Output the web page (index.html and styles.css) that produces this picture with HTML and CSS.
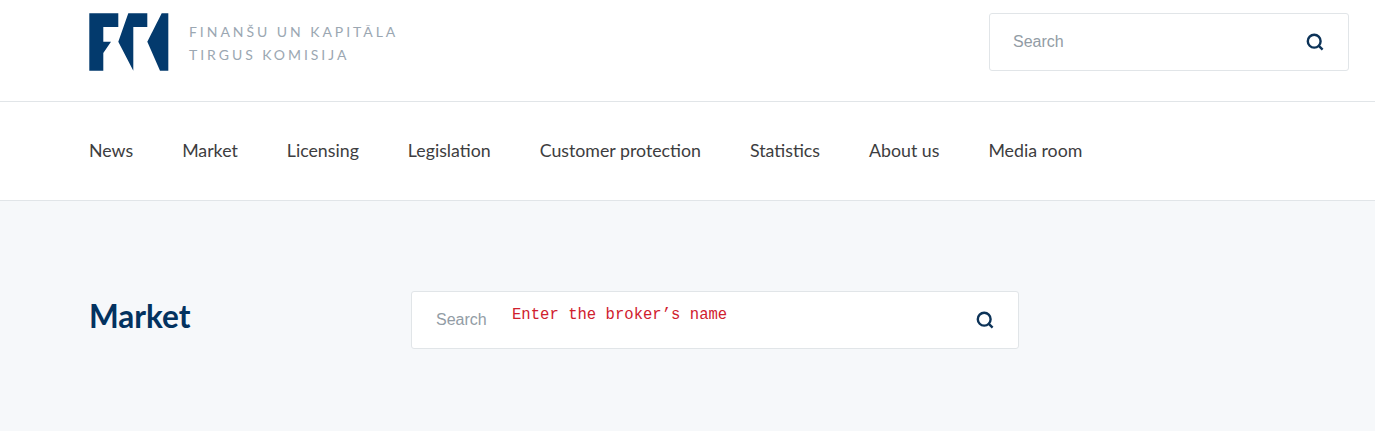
FILE: index.html
```html
<!DOCTYPE html>
<html lang="en">
<head>
    <meta charset="UTF-8">
    <meta name="viewport" content="width=device-width, initial-scale=1.0">
    <title>Market</title>
    <link rel="stylesheet" href="styles.css">
</head>
<body>
    <header class="top-bar">
        <a class="logo" href="#">
            <svg class="logo-mark" width="80" height="58" viewBox="0 0 80 58">
                <polygon points="0.3,0.3 29.3,0.3 29.3,14 14.3,14 14.3,28.7 22,28.7 14.3,40 14.3,57.7 0.3,57.7" fill="#033a6d"/>
                <polygon points="39.3,0.3 58.3,0.3 58.3,14 44.3,14 44.3,57.7 29.3,28.7" fill="#033a6d"/>
                <polygon points="72.7,0.3 79.3,0.3 79.3,57.7 71,57.7 58.3,28.7" fill="#033a6d"/>
            </svg>
            <span class="logo-text">
                <span>FINANŠU UN KAPITĀLA</span>
                <span>TIRGUS KOMISIJA</span>
            </span>
        </a>
        <form class="search search-top">
            <input type="text" placeholder="Search">
            <svg class="search-icon" width="18" height="18" viewBox="0 0 18 18">
                <circle cx="8.2" cy="8.2" r="6.4" fill="none" stroke="#0c3358" stroke-width="2.4"/>
                <line x1="12.8" y1="12.8" x2="16.6" y2="16.6" stroke="#0c3358" stroke-width="2.4"/>
            </svg>
        </form>
    </header>

    <nav class="main-nav">
        <a href="#">News</a>
        <a href="#">Market</a>
        <a href="#">Licensing</a>
        <a href="#">Legislation</a>
        <a href="#">Customer protection</a>
        <a href="#">Statistics</a>
        <a href="#">About us</a>
        <a href="#">Media room</a>
    </nav>

    <main class="page-head">
        <h1>Market</h1>
        <form class="search search-page">
            <input type="text" placeholder="Search">
            <span class="search-note">Enter the broker’s name</span>
            <svg class="search-icon" width="18" height="18" viewBox="0 0 18 18">
                <circle cx="8.2" cy="8.2" r="6.4" fill="none" stroke="#0c3358" stroke-width="2.4"/>
                <line x1="12.8" y1="12.8" x2="16.6" y2="16.6" stroke="#0c3358" stroke-width="2.4"/>
            </svg>
        </form>
    </main>
</body>
</html>
```

FILE: styles.css
```css
body {
    font-family: Lato, "Liberation Sans", sans-serif;
    background-color: #fff;
    margin: 0;
    padding: 0;
}

a {
    text-decoration: none;
}

.top-bar {
    display: flex;
    justify-content: space-between;
    align-items: flex-start;
    height: 102px;
    padding: 13px 26px 0 89px;
    box-sizing: border-box;
    border-bottom: 1px solid #e1e5e8;
}

.logo {
    display: flex;
    align-items: center;
    gap: 20px;
    height: 58px;
}

.logo-mark {
    display: block;
}

.logo-text {
    display: flex;
    flex-direction: column;
    gap: 5px;
    padding-top: 2px;
    font-size: 14px;
    line-height: 18px;
    letter-spacing: 2.95px;
    color: #9ba7b2;
}

.search {
    display: flex;
    align-items: center;
    position: relative;
    height: 58px;
    box-sizing: border-box;
    background: #fff;
    border: 1px solid #e1e5e8;
    border-radius: 3px;
}

.search input {
    flex: 1;
    min-width: 0;
    border: none;
    outline: none;
    background: none;
    padding: 0;
    font-family: "Liberation Sans", Arial, sans-serif;
    font-size: 16px;
    color: #333;
}

.search input::placeholder {
    color: #929ca5;
    opacity: 1;
}

.search-top {
    width: 360px;
    padding: 0 24px 0 23px;
}

.search-icon {
    flex: none;
}

.main-nav {
    display: flex;
    align-items: center;
    gap: 49px;
    height: 99px;
    padding: 0 0 3px 89px;
    box-sizing: border-box;
    border-bottom: 1px solid #e1e5e8;
}

.main-nav a {
    font-size: 17.75px;
    color: #3d3d40;
}

.page-head {
    display: flex;
    align-items: flex-start;
    height: 230px;
    padding: 90px 0 0 89px;
    box-sizing: border-box;
    background-color: #f6f8fa;
}

h1 {
    width: 322px;
    margin: 0;
    font-size: 31.5px;
    font-weight: 700;
    line-height: 50px;
    color: #03325f;
}

.search-page {
    width: 608px;
    padding: 0 24px;
}

/* red note sits on top of the field */
.search-note {
    position: absolute;
    left: 100px;
    top: 14px;
    font-family: "Liberation Mono", monospace;
    font-size: 15.6px;
    color: #d0202e;
}
```
